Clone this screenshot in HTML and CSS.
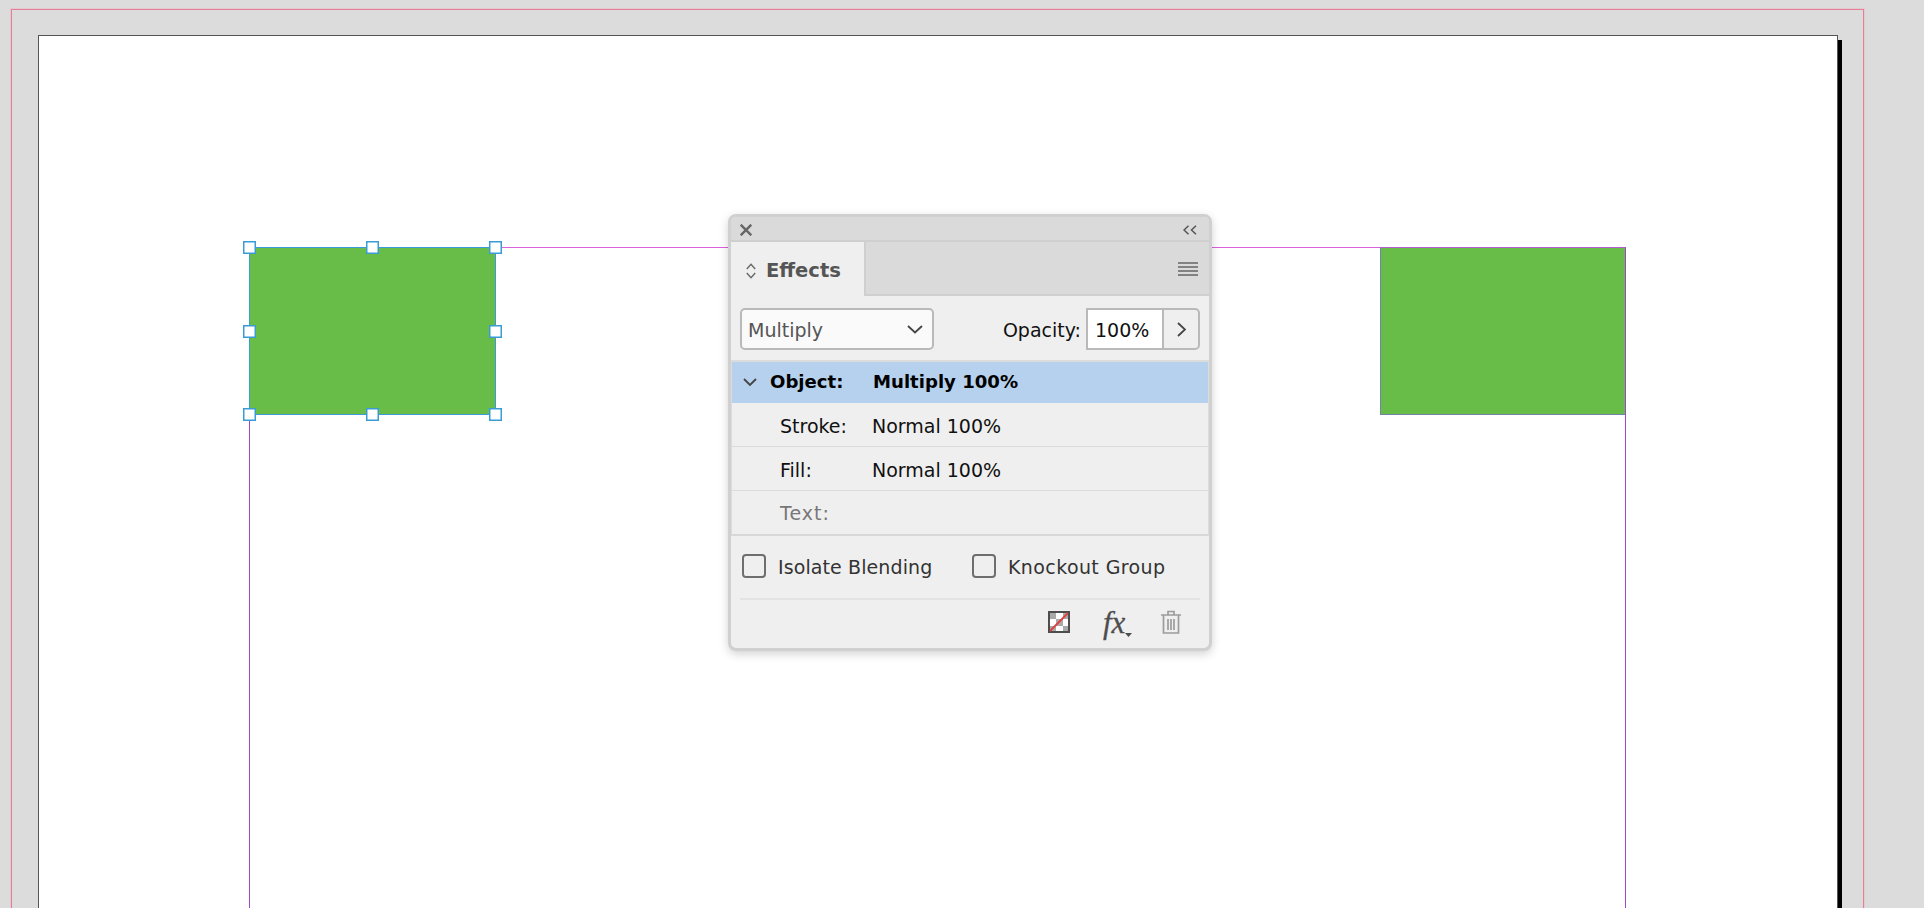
FILE: index.html
```html
<!DOCTYPE html>
<html lang="en">
<head>
<meta charset="utf-8">
<title>Effects panel</title>
<link rel="stylesheet" href="styles.css">
</head>
<body>
<main class="canvas">
  <div class="bleed"></div>
  <div class="page-shadow"></div>
  <div class="page"></div>
  <div class="guide"></div>
  <div class="frame frame-selected">
    <span class="handle h-tl"></span><span class="handle h-tc"></span><span class="handle h-tr"></span>
    <span class="handle h-ml"></span><span class="handle h-mr"></span>
    <span class="handle h-bl"></span><span class="handle h-bc"></span><span class="handle h-br"></span>
  </div>
  <div class="frame frame-plain"></div>

  <section class="panel">
    <header class="titlebar">
      <svg class="icon-close" width="12" height="12" viewBox="0 0 12 12"><path d="M.7.7l10.6 10.6M11.300.7L.7 11.300"/></svg>
      <svg class="icon-collapse" width="14" height="10" viewBox="0 0 14 10"><path d="M5.500.7L1 5l4.500 4.300M13 .7L8.500 5l4.500 4.300"/></svg>
    </header>
    <div class="tabbar">
      <div class="tab">
        <svg class="icon-sort" width="10" height="16" viewBox="0 0 10 16"><path d="M.8 6L5 1.200 9.200 6M.8 10L5 14.800 9.200 10"/></svg>
        <span class="tab-label">Effects</span>
      </div>
      <svg class="icon-menu" width="20" height="14" viewBox="0 0 20 14"><path d="M0 1h20M0 5h20M0 9h20M0 13h20"/></svg>
    </div>
    <div class="controls">
      <div class="select">
        <span class="select-value">Multiply</span>
        <svg class="icon-chev" width="16" height="9" viewBox="0 0 16 9"><path d="M1 1l7 6.500L15 1"/></svg>
      </div>
      <div class="opacity">
        <span class="opacity-label">Opacity:</span>
        <div class="stepper">
          <span class="stepper-value">100%</span>
          <span class="stepper-btn"><svg class="icon-chev" width="9" height="15" viewBox="0 0 9 15"><path d="M1 1l7 6.500L1 14"/></svg></span>
        </div>
      </div>
    </div>
    <div class="list">
      <div class="row row-object">
        <svg class="icon-chev row-twist" width="14" height="8" viewBox="0 0 14 8"><path d="M1 1l6 6 6-6"/></svg>
        <span class="row-name">Object:</span><span class="row-value">Multiply 100%</span>
      </div>
      <div class="row row-child"><span class="row-name">Stroke:</span><span class="row-value">Normal 100%</span></div>
      <div class="row row-child"><span class="row-name">Fill:</span><span class="row-value">Normal 100%</span></div>
      <div class="row row-child row-off"><span class="row-name">Text:</span></div>
    </div>
    <div class="options">
      <label class="check check-first"><span class="box"></span><span class="check-label">Isolate Blending</span></label>
      <label class="check"><span class="box"></span><span class="check-label check-label-wide">Knockout Group</span></label>
    </div>
    <footer class="footer">
      <svg class="icon-mask" width="22" height="22" viewBox="0 0 22 22">
        <rect x="1" y="1" width="20" height="20" fill="#fff"/>
        <path fill="#a9a9a9" d="M1 1h7v7H1zM15 1h6v7h-6zM8 8h7v7H8zM1 15h7v6H1zM15 15h6v6h-6z"/>
        <rect x="1" y="1" width="20" height="20" fill="none" stroke="#4d4d4d" stroke-width="2"/>
        <path d="M2 20L20 2" stroke="#e0403f" stroke-width="1.800"/>
      </svg>
      <div class="fx"><span class="fx-text">fx</span><svg class="icon-caret" width="7" height="4" viewBox="0 0 7 4"><path d="M0 0h7L3.500 4z"/></svg></div>
      <svg class="icon-trash" width="22" height="24" viewBox="0 0 22 24"><path d="M1 5h20M8 5V1.500h6V5M3.500 5v18h15V5M8 9v11M11 9v11M14 9v11"/></svg>
    </footer>
  </section>
</main>
</body>
</html>
```

FILE: styles.css
```css
* { box-sizing: border-box; }
html, body { margin: 0; height: 100%; }
body { overflow: hidden; background: #dcdcdc; }

.canvas {
  position: relative;
  width: 1924px;
  height: 908px;
  overflow: hidden;
  background: #dcdcdc;
  font-family: "DejaVu Sans", sans-serif;
}

.bleed {
  position: absolute;
  left: 11px; top: 9px;
  width: 1853px;
  height: 1000px;
  border: 1px solid #e57f98;
  outline: 1px solid rgba(240, 170, 190, .35);
}
.page {
  position: absolute;
  left: 38px; top: 35px;
  width: 1800px;
  height: 1000px;
  background: #fff;
  border: 1px solid #555;
}
.page-shadow {
  position: absolute;
  left: 1838px; top: 40px;
  width: 4px;
  height: 1000px;
  background: #000;
}
.guide {
  position: absolute;
  left: 249px; top: 247px;
  width: 1377px;
  height: 1000px;
  border: 1px solid #a045cd;
  border-top-color: #dc5fdc;
}
.frame {
  position: absolute;
  top: 247px;
  height: 168px;
  background: #67bd47;
}
.frame-selected {
  left: 249px;
  width: 247px;
  border: 1px solid #3b9bd6;
}
.frame-plain {
  left: 1380px;
  width: 246px;
  border-left: 1px solid #6f86a6;
  border-bottom: 1px solid #6f86a6;
  border-top: 1px solid #b45fcf;
  border-right: 1px solid #a045cd;
}
.handle {
  position: absolute;
  width: 13px;
  height: 13px;
  background: #fff;
  border: 1px solid #3b9bd6;
  box-shadow: inset 0 0 0 .5px #3b9bd6;
}
.h-tl, .h-tc, .h-tr { top: -7px; }
.h-ml, .h-mr { top: 77px; }
.h-bl, .h-bc, .h-br { top: 160px; }
.h-tl, .h-ml, .h-bl { left: -7px; }
.h-tc, .h-bc { left: 116px; }
.h-tr, .h-mr, .h-br { left: 239px; }

/* Panel */
.panel {
  position: absolute;
  left: 728px; top: 214px;
  width: 484px;
  display: flex;
  flex-direction: column;
  background: #efefef;
  border: 3px solid #d0d0d0;
  border-radius: 8px;
  box-shadow: 0 3px 10px rgba(0, 0, 0, .18);
  font-size: 19px;
  color: #111;
}
.panel svg { display: block; fill: none; flex: none; }
.titlebar {
  height: 25px;
  display: flex;
  align-items: center;
  justify-content: space-between;
  padding: 2px 12px 0 9px;
  background: #dadada;
  border-bottom: 2px solid #cfcfcf;
  border-radius: 5px 5px 0 0;
}
.icon-close path { stroke: #666; stroke-width: 2.400; }
.icon-collapse path { stroke: #555; stroke-width: 1.500; }

.tabbar {
  height: 54px;
  display: flex;
  justify-content: space-between;
  background: #dadada;
  border-bottom: 2px solid #cfcfcf;
  padding-right: 11px;
}
.tab {
  width: 135px;
  height: 54px;
  display: flex;
  align-items: center;
  gap: 10px;
  padding: 3px 0 0 15px;
  background: #efefef;
  border-right: 2px solid #cfcfcf;
}
.icon-sort path { stroke: #666; stroke-width: 1.300; }
.tab-label { font-weight: 700; color: #555; font-size: 19.500px; }
.icon-menu { margin-top: 20px; }
.icon-menu path { stroke: #666; stroke-width: 1.300; }

.controls {
  height: 64px;
  display: flex;
  justify-content: space-between;
  padding: 12px 9px 0 9px;
}
.select {
  width: 194px;
  height: 42px;
  display: flex;
  align-items: center;
  justify-content: space-between;
  padding: 0 9px 0 6px;
  background: #fafafa;
  border: 2px solid #b9b9b9;
  border-radius: 5px;
  color: #555;
}
.select-value { padding-top: 2px; }
.icon-chev path { stroke: #444; stroke-width: 1.800; }
.opacity { display: flex; align-items: center; height: 42px; gap: 5px; }
.opacity-label { color: #111; padding-top: 2px; }
.stepper {
  width: 114px;
  height: 42px;
  display: flex;
  border: 2px solid #b9b9b9;
  border-radius: 0 5px 5px 0;
  background: #efefef;
}
.stepper-value {
  width: 76px;
  padding-left: 7px;
  line-height: 40px;
  background: #fff;
  border-right: 2px solid #b9b9b9;
}
.stepper-btn {
  flex: 1;
  display: flex;
  align-items: center;
  justify-content: center;
}

.list {
  border: 1px solid #dcdcdc;
  border-width: 2px 1px;
  border-bottom-color: #d8d8d8;
}
.row {
  display: flex;
  align-items: center;
  height: 44px;
  border-bottom: 1px solid #dcdcdc;
}
.row-name { width: 92px; }
.row-child { padding: 2px 0 0 48px; }
.row-child:last-child { height: 43px; border-bottom: 0; padding-top: 0; }
.row-object {
  height: 41px;
  padding: 0 0 2px 11px;
  background: #b5d1ee;
  border-bottom: 0;
  font-weight: 700;
  font-size: 18.100px;
  color: #000;
}
.row-twist { margin-right: 13px; }
.row-object .row-name { width: 103px; }
.row-off .row-name { color: #777; letter-spacing: 1px; }

.options {
  display: flex;
  padding: 18px 0 20px 2px;
  margin: 0 9px;
  border-bottom: 2px solid #e3e3e3;
  color: #333;
}
.check { display: flex; align-items: center; gap: 12px; }
.check-first { width: 230px; }
.check-label { padding-top: 2px; letter-spacing: .1px; }
.check-label-wide { letter-spacing: .4px; }
.box {
  width: 24px;
  height: 24px;
  border: 2px solid #6e6e6e;
  border-radius: 4px;
}

.footer {
  height: 48px;
  display: flex;
  justify-content: flex-end;
  align-items: center;
  gap: 28px;
  padding: 0 27px 5px 0;
}
.icon-mask { margin-right: 5px; }
.fx { display: flex; align-items: flex-end; width: 29px; height: 26px; position: relative; }
.fx-text {
  font-family: "Liberation Serif", serif;
  font-style: italic;
  font-size: 31px;
  line-height: 24px;
  color: #4d4d4d;
  -webkit-text-stroke: .3px #4d4d4d;
}
.icon-caret { position: absolute; right: 0; bottom: -2px; }
.icon-caret path { fill: #4d4d4d; }
.icon-trash path { stroke: #9c9c9c; stroke-width: 1.700; }
```
